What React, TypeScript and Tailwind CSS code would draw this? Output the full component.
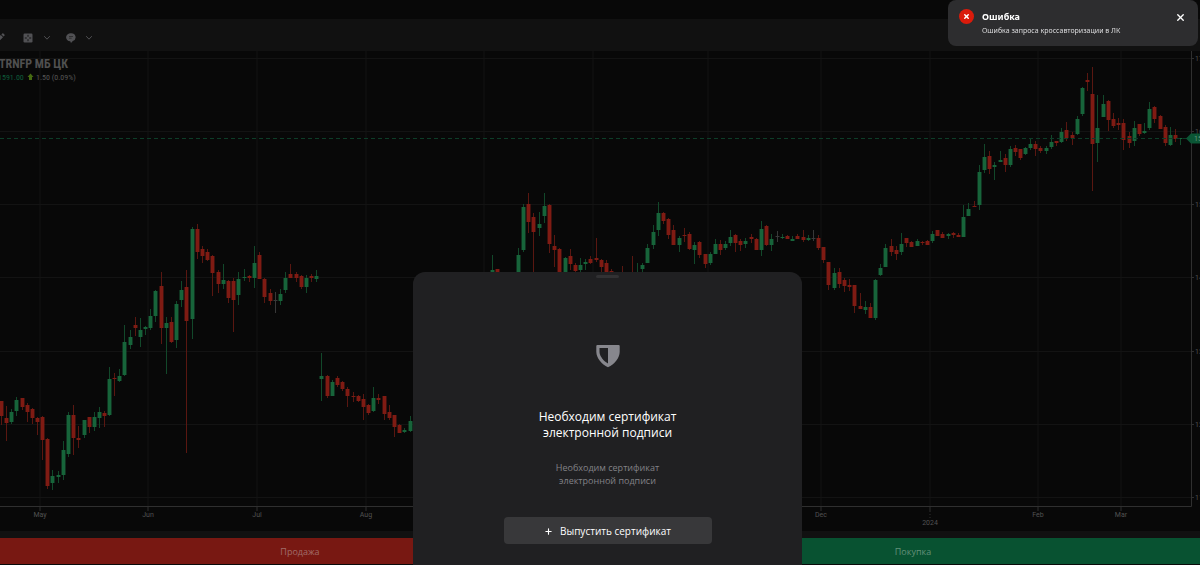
import { Plus, X } from "lucide-react";

type Tone = "g" | "r" | "n";
type Candle = [x: number, tone: Tone, high: number, top: number, bottom: number, low: number];

const bodyColor = { g: "#17643a", r: "#7f1b13", n: "#3a3a3a" };
const wickColor = { g: "#12482a", r: "#5a1711", n: "#383838" };

const candles: Candle[] = [
  [1, "r", 401, 401, 416, 425], [6, "r", 406, 418, 423, 441], [11, "g", 409, 412, 422, 424],
  [16, "g", 397, 400, 411, 416], [22, "r", 398, 398, 407, 410], [27, "r", 403, 405, 412, 422],
  [32, "r", 408, 409, 418, 424], [37, "r", 417, 418, 422, 435], [42, "r", 416, 417, 440, 460],
  [47, "r", 438, 439, 486, 489], [52, "g", 470, 476, 483, 490], [58, "g", 471, 475, 477, 483],
  [63, "g", 441, 450, 475, 480], [68, "g", 412, 415, 454, 457], [73, "r", 405, 415, 438, 455],
  [78, "r", 426, 438, 440, 448], [84, "g", 420, 420, 435, 438], [89, "r", 417, 417, 427, 433],
  [94, "g", 412, 417, 427, 431], [99, "g", 407, 412, 418, 428], [104, "r", 411, 413, 416, 427],
  [109, "g", 367, 379, 415, 416], [114, "r", 373, 378, 379, 396], [119, "g", 369, 376, 381, 382],
  [124, "g", 325, 342, 375, 376], [130, "g", 330, 337, 345, 349], [135, "r", 317, 325, 328, 336],
  [140, "g", 318, 330, 337, 347], [145, "g", 326, 327, 329, 335], [150, "g", 309, 316, 328, 330],
  [155, "g", 290, 291, 316, 322], [161, "r", 272, 286, 328, 344], [166, "g", 317, 323, 328, 374],
  [171, "r", 317, 322, 342, 343], [176, "g", 301, 304, 340, 348], [181, "g", 281, 290, 300, 307],
  [186, "r", 270, 287, 321, 453], [192, "g", 227, 229, 319, 339], [197, "r", 224, 229, 252, 259],
  [202, "r", 246, 249, 256, 263], [207, "r", 249, 252, 260, 261], [212, "r", 255, 256, 273, 296],
  [218, "r", 270, 272, 284, 293], [223, "g", 264, 280, 284, 289], [228, "r", 280, 281, 298, 303],
  [233, "r", 278, 281, 300, 332], [238, "g", 272, 279, 295, 305], [244, "g", 269, 277, 278, 281],
  [249, "r", 275, 276, 278, 282], [254, "g", 246, 263, 278, 288], [259, "r", 252, 255, 279, 279],
  [264, "r", 278, 279, 297, 303], [270, "r", 289, 293, 301, 305], [275, "n", 292, 300, 301, 313],
  [280, "g", 289, 294, 301, 305], [285, "g", 272, 278, 290, 293], [290, "r", 264, 274, 278, 278],
  [296, "r", 272, 274, 278, 282], [301, "r", 275, 276, 287, 289], [306, "g", 275, 278, 287, 293],
  [311, "r", 274, 276, 278, 282], [316, "g", 270, 276, 279, 282], [321, "g", 353, 376, 379, 401],
  [327, "r", 375, 376, 396, 398], [332, "g", 380, 382, 396, 396], [337, "r", 376, 378, 385, 387],
  [342, "r", 381, 382, 389, 391], [347, "r", 387, 389, 396, 407], [353, "r", 392, 396, 397, 402],
  [358, "r", 395, 396, 401, 402], [363, "r", 394, 399, 407, 420], [368, "r", 404, 405, 413, 415],
  [373, "g", 387, 398, 411, 412], [378, "r", 394, 398, 400, 404], [384, "r", 396, 396, 414, 420],
  [389, "r", 405, 412, 418, 420], [394, "r", 415, 415, 427, 437], [399, "r", 424, 425, 433, 433],
  [404, "g", 428, 430, 432, 433], [410, "g", 416, 421, 431, 432], [492, "g", 255, 270, 276, 276],
  [497, "r", 269, 269, 276, 276], [518, "g", 248, 255, 276, 276], [523, "g", 204, 207, 250, 252],
  [528, "r", 193, 204, 222, 233], [533, "r", 213, 217, 232, 276], [539, "g", 212, 224, 228, 236],
  [544, "g", 193, 206, 216, 223], [549, "r", 204, 205, 244, 253], [554, "r", 235, 246, 250, 267],
  [559, "r", 248, 249, 276, 276], [565, "g", 257, 258, 276, 276], [570, "r", 249, 256, 264, 270],
  [575, "r", 263, 265, 271, 273], [580, "g", 258, 265, 270, 272], [585, "g", 259, 262, 264, 270],
  [590, "r", 256, 259, 263, 264], [596, "r", 238, 258, 260, 262], [601, "r", 259, 260, 267, 273],
  [606, "r", 260, 263, 276, 276], [611, "r", 269, 271, 276, 276], [622, "r", 266, 275, 276, 276],
  [632, "r", 256, 275, 276, 276], [637, "g", 263, 272, 276, 276], [642, "g", 263, 265, 269, 272],
  [647, "g", 244, 248, 263, 263], [653, "g", 225, 232, 245, 249], [658, "g", 202, 213, 230, 236],
  [663, "r", 212, 213, 221, 224], [668, "r", 218, 219, 235, 239], [673, "r", 225, 230, 245, 245],
  [679, "g", 236, 238, 245, 252], [684, "r", 228, 235, 236, 242], [689, "r", 232, 234, 249, 250],
  [694, "g", 242, 245, 250, 264], [699, "r", 241, 242, 255, 258], [705, "r", 254, 254, 264, 268],
  [710, "g", 252, 254, 263, 265], [715, "g", 239, 244, 254, 254], [720, "r", 240, 244, 250, 255],
  [725, "g", 241, 244, 248, 250], [730, "g", 230, 237, 243, 246], [735, "r", 234, 235, 243, 252],
  [740, "r", 239, 241, 245, 251], [745, "g", 238, 241, 244, 248], [751, "r", 234, 237, 239, 243],
  [756, "r", 238, 239, 250, 250], [761, "g", 221, 229, 250, 256], [766, "r", 225, 226, 245, 246],
  [771, "g", 234, 239, 245, 251], [777, "n", 231, 236, 237, 242], [782, "g", 234, 237, 238, 239],
  [787, "r", 235, 236, 239, 239], [792, "g", 236, 239, 241, 241], [797, "r", 234, 236, 239, 239],
  [803, "r", 230, 237, 240, 242], [808, "g", 235, 238, 240, 241], [813, "n", 230, 238, 239, 241],
  [818, "r", 235, 238, 248, 250], [823, "r", 247, 247, 260, 263], [828, "r", 262, 262, 285, 290],
  [834, "g", 268, 273, 288, 290], [839, "r", 268, 272, 284, 288], [844, "r", 278, 280, 286, 292],
  [849, "r", 279, 285, 287, 291], [854, "r", 285, 285, 306, 313], [860, "r", 293, 306, 309, 309],
  [865, "g", 301, 307, 310, 314], [870, "r", 303, 307, 318, 318], [875, "g", 279, 280, 318, 320],
  [880, "g", 264, 268, 275, 276], [885, "g", 244, 248, 267, 267], [891, "r", 239, 246, 252, 256],
  [896, "r", 246, 250, 254, 260], [901, "g", 233, 244, 252, 255], [906, "r", 238, 238, 243, 247],
  [911, "r", 241, 242, 247, 247], [917, "g", 239, 241, 246, 246], [922, "r", 241, 242, 243, 245],
  [927, "r", 240, 241, 245, 245], [932, "g", 231, 234, 241, 243], [937, "r", 230, 230, 236, 236],
  [942, "r", 232, 234, 238, 238], [948, "g", 233, 234, 236, 239], [953, "r", 232, 233, 235, 238],
  [958, "r", 233, 235, 237, 237], [963, "g", 205, 217, 237, 237], [968, "g", 203, 209, 216, 216],
  [974, "r", 201, 206, 207, 207], [979, "g", 165, 172, 205, 210], [984, "g", 144, 157, 170, 173],
  [989, "r", 151, 156, 169, 174], [994, "g", 162, 165, 167, 180], [1000, "g", 151, 160, 162, 162],
  [1005, "r", 154, 158, 165, 172], [1010, "g", 146, 149, 165, 167], [1015, "r", 145, 148, 152, 156],
  [1020, "r", 149, 149, 158, 160], [1025, "g", 147, 148, 154, 155], [1030, "g", 138, 144, 148, 150],
  [1035, "r", 141, 144, 149, 156], [1040, "r", 146, 148, 151, 153], [1046, "g", 146, 148, 151, 154],
  [1051, "g", 135, 142, 147, 149], [1056, "r", 141, 141, 143, 146], [1061, "g", 128, 132, 142, 143],
  [1066, "r", 122, 130, 138, 141], [1072, "r", 132, 135, 138, 145], [1077, "g", 116, 119, 134, 135],
  [1082, "g", 87, 88, 114, 116], [1087, "r", 73, 80, 82, 91], [1092, "r", 67, 94, 144, 191],
  [1097, "g", 95, 128, 143, 162], [1103, "g", 95, 104, 117, 117], [1108, "r", 100, 101, 120, 131],
  [1113, "r", 113, 119, 126, 128], [1118, "r", 118, 123, 125, 130], [1123, "r", 119, 123, 140, 150],
  [1129, "r", 132, 136, 143, 148], [1134, "g", 121, 128, 141, 146], [1139, "r", 124, 124, 134, 136],
  [1144, "g", 123, 131, 133, 134], [1149, "g", 102, 109, 128, 130], [1154, "r", 106, 107, 119, 123],
  [1160, "r", 115, 116, 129, 129], [1165, "r", 125, 127, 143, 146], [1170, "g", 127, 135, 145, 146],
  [1175, "r", 129, 135, 139, 142], [1180, "g", 138, 138, 139, 145],
];

const months = [
  { x: 40, label: "May" },
  { x: 148, label: "Jun" },
  { x: 257, label: "Jul" },
  { x: 366, label: "Aug" },
  { x: 484, label: "Sep" },
  { x: 593, label: "Oct" },
  { x: 708, label: "Nov" },
  { x: 821, label: "Dec" },
  { x: 930, label: "" },
  { x: 1038, label: "Feb" },
  { x: 1121, label: "Mar" },
];

const prices = [
  { y: 58, label: "1700" },
  { y: 131, label: "1600" },
  { y: 204, label: "1500" },
  { y: 277, label: "1400" },
  { y: 351, label: "1300" },
  { y: 424, label: "1200" },
  { y: 497, label: "1100" },
];

function Chevron() {
  return (
    <svg viewBox="0 0 8 6" className="h-[6px] w-[8px]" fill="none" stroke="#505053" strokeWidth="1">
      <path d="M1.2 1.2 4 4.2 6.8 1.2" />
    </svg>
  );
}

function Toolbar() {
  return (
    <div className="flex h-8 items-center overflow-hidden bg-[#111111] pt-[5px]">
      <button aria-label="Рисование" className="-ml-[5px] shrink-0">
        <svg viewBox="0 0 10 10" className="size-[10px]" fill="#515154">
          <path d="M1 9V6.800l4.800-4.800 2.200 2.200L3.200 9zM6.400 1.400 7.300.6a.8.8 0 0 1 1.100 0l1 1a.8.8 0 0 1 0 1.100l-.8.9z" />
        </svg>
      </button>
      <button aria-label="Индикаторы" className="ml-[18px] flex items-center gap-[10px]">
        <svg viewBox="0 0 10 10" className="size-[10px]">
          <rect x=".5" y=".5" width="9" height="9" rx="1.200" fill="#515154" />
          <path d="M5 1.800v2M5 6.200v2M1.800 5h2M6.200 5h2" stroke="#151515" strokeWidth="1" />
        </svg>
        <Chevron />
      </button>
      <button aria-label="Комментарии" className="ml-[15px] flex items-center gap-[9px]">
        <svg viewBox="0 0 10 10" className="size-[10px]">
          <path d="M5 .3a4.500 4 0 0 1 1.800 7.700L5 9.900 4.200 8.300A4.500 4 0 0 1 5 .3z" fill="#515154" />
          <path d="M3 3.500h4M3 5.200h2.600" stroke="#222" strokeWidth=".7" />
        </svg>
        <Chevron />
      </button>
    </div>
  );
}

function Chart() {
  return (
    <svg viewBox="0 51 1200 480" className="block h-auto w-full bg-[#080808] font-['Roboto',sans-serif]">
      <g stroke="#131313">
        {months.map((m) => (
          <path key={m.x} d={`M${m.x} 51V507`} />
        ))}
        {prices.map((p) => (
          <path key={p.y} d={`M0 ${p.y + 0.5}H1191`} />
        ))}
      </g>
      <g shapeRendering="crispEdges">
        {candles.map(([x, tone, high, top, bottom, low]) => (
          <g key={x}>
            <rect x={x} y={high} width="1" height={low - high} fill={wickColor[tone]} />
            <rect x={x - 2} y={top} width="5" height={Math.max(bottom - top, 1)} fill={bodyColor[tone]} opacity="0.45" />
            <rect x={x - 1} y={top} width="3" height={Math.max(bottom - top, 1)} fill={bodyColor[tone]} />
          </g>
        ))}
      </g>
      <path d="M0 138.500H1188" stroke="#0d3d28" strokeDasharray="4 3" />
      <path d="M0 506.500H1191.500V51" fill="none" stroke="#2f2f2f" />
      <g fontSize="7" fill="#525252">
        {months.map((m) => (
          <g key={m.x}>
            <path d={`M${m.x} 507v4`} stroke="#2f2f2f" />
            <text x={m.x} y="517" textAnchor="middle">{m.label}</text>
          </g>
        ))}
        <path d="M930 511v8" stroke="#2f2f2f" strokeDasharray="1 2" />
        <text x="930" y="525" textAnchor="middle">2024</text>
        {prices.map((p) => (
          <g key={p.y}>
            <path d={`M1191 ${p.y + 0.5}h3`} stroke="#2f2f2f" />
            <text x="1195" y={p.y + 3}>{p.label}</text>
          </g>
        ))}
      </g>
      <path d="M1186 138.500 1191 133.500h12v10h-12z" fill="#0b5635" />
      <text x="1194" y="141" fontSize="7" fill="#66957f">1591.00</text>
      <g className="font-['Roboto_Condensed','Roboto',sans-serif]">
        <text x="-1" y="68" fontSize="12" fontWeight="700" fill="#505050">TRNFP МБ ЦК</text>
        <text x="-2" y="80" fontSize="8" fill="#0e5c3b">1591.00</text>
        <text x="36" y="80" fontSize="8" fill="#565656">1.50 (0.09%)</text>
      </g>
      <path d="M30.500 73.500 33.500 77H32v3h-3v-3h-1.500z" fill="#466b12" />
    </svg>
  );
}

function Toast() {
  return (
    <div role="alert" className="fixed top-0 right-[2px] flex h-[46px] w-[250px] rounded-lg bg-[#2d2d2f] pt-[9px] pr-[12px] pl-[11px]">
      <span className="flex size-[15px] shrink-0 items-center justify-center rounded-full bg-[#da1b0b] text-white">
        <X className="size-[7px]" strokeWidth={5} />
      </span>
      <div className="ml-2 flex-1 font-['Noto_Sans',sans-serif]">
        <p className="text-[9px] leading-[15px] font-bold text-white">Ошибка</p>
        <p className="text-[7px] leading-[13px] text-[#dcdcde]">Ошибка запроса кроссавторизации в ЛК</p>
      </div>
      <button aria-label="Закрыть" className="flex h-4 items-center text-white">
        <X className="size-[11px]" strokeWidth={3} />
      </button>
    </div>
  );
}

function CertificateModal() {
  return (
    <div className="fixed inset-x-0 bottom-0 flex justify-center pl-[15px]">
      <section
        role="dialog"
        aria-labelledby="certificate-title"
        className="flex w-[389px] flex-col items-center rounded-t-xl bg-[#202022] pt-[3px] pb-[21px] text-center"
      >
        <span className="h-[3px] w-[23px] rounded-full bg-[#313133]" />
        <svg viewBox="0 0 24 24" className="mt-[66px] size-6">
          <path d="M1.300 1H22.700Q23.700 1 23.700 2V8C23.500 14 18.500 20.500 12 23.300C5.500 20.500.5 14 .3 8V2Q.3 1 1.300 1z" fill="#87878d" />
          <path d="M3.500 4H12v15.500C8 17.500 3.700 12.500 3.500 8z" fill="#202022" />
        </svg>
        <h1 id="certificate-title" className="mt-[41px] text-[12px] leading-4 text-white">
          Необходим сертификат
          <br />
          электронной подписи
        </h1>
        <p className="mt-5 text-[9px] leading-[13px] text-[#828287]">
          Необходим сертификат
          <br />
          электронной подписи
        </p>
        <button className="mt-[30px] flex h-[27px] w-[208px] items-center justify-center gap-[7px] rounded-sm bg-[#38383a] pt-px text-[10px] text-white">
          <Plus className="size-[9px]" strokeWidth={3} />
          Выпустить сертификат
        </button>
      </section>
    </div>
  );
}

export default function App() {
  return (
    <main className="min-h-screen overflow-hidden bg-[#111111] font-['Open_Sans','Noto_Sans',sans-serif]">
      <div className="h-[19px] bg-[#080808]" />
      <Toolbar />
      <Chart />
      <div className="mt-[7px] flex gap-[26px] border-b-2 border-[#0a0a0a] text-[9px] leading-[25px]">
        <button className="w-1/2 bg-[#781812] pt-px text-[#a06c69]">Продажа</button>
        <button className="flex-1 bg-[#085231] pt-px text-[#639078]">Покупка</button>
      </div>
      <CertificateModal />
      <Toast />
    </main>
  );
}
